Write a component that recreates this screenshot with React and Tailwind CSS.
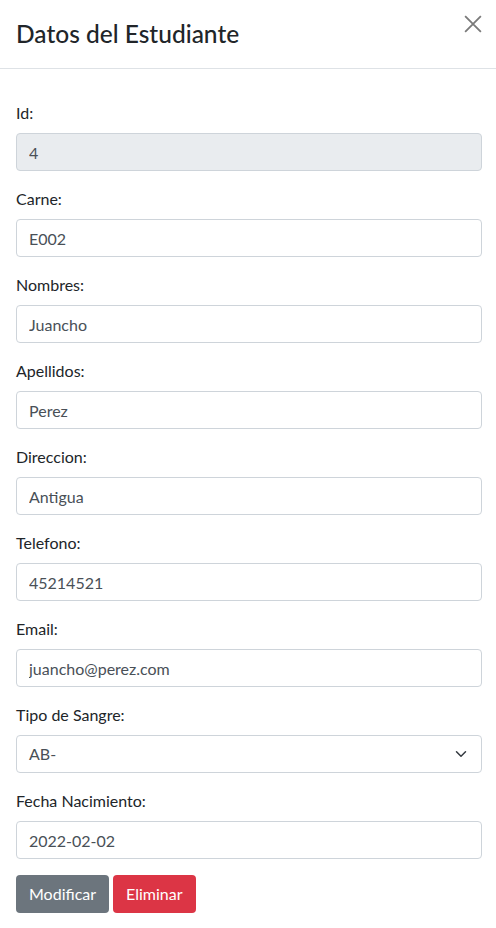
import React from 'react';

const fields = [
  { label: 'Carne:', value: 'E002' },
  { label: 'Nombres:', value: 'Juancho' },
  { label: 'Apellidos:', value: 'Perez' },
  { label: 'Direccion:', value: 'Antigua' },
  { label: 'Telefono:', value: '45214521' },
  { label: 'Email:', value: 'juancho@perez.com' },
];

const inputCls =
  'block w-full h-[38px] px-3 rounded-[4px] border border-[#ced4da] text-[16px] text-[#495057] outline-none';

function Field({ label, children }) {
  return (
    <div className="mb-4">
      <label className="block h-6 leading-6 mb-2 text-[16px] text-[#212529]">{label}</label>
      {children}
    </div>
  );
}

export default function App() {
  return (
    <div
      className="w-[496px] min-h-[928px] bg-white text-[#212529]"
      style={{ fontFamily: 'Lato, "Open Sans", sans-serif' }}
    >
      {/* Header */}
      <div className="h-[69px] flex items-center justify-between pl-4 pr-[14px] border-b border-[#dee2e6]">
        <h5 className="text-[24.5px] font-medium leading-[30px] text-[#212529]">Datos del Estudiante</h5>
        <button className="self-start mt-[15px] w-[18px] h-[18px] text-[#7a7a7a]" aria-label="Close">
          <svg viewBox="0 0 16 16" className="w-[18px] h-[18px]" fill="none" stroke="currentColor" strokeWidth="1.6">
            <path d="M1 1l14 14M15 1L1 15" />
          </svg>
        </button>
      </div>

      {/* Body */}
      <div className="pl-4 pr-[14px] pt-[32px] pb-4">
        <Field label="Id:">
          <input className={`${inputCls} bg-[#e9ecef]`} value="4" disabled readOnly />
        </Field>
        {fields.map((f) => (
          <Field key={f.label} label={f.label}>
            <input className={`${inputCls} bg-white`} value={f.value} readOnly />
          </Field>
        ))}
        <Field label="Tipo de Sangre:">
          <div className={`${inputCls} bg-white flex items-center justify-between pr-3 text-[#212529]`}>
            <span>AB-</span>
            <svg viewBox="0 0 16 16" className="w-4 h-3" fill="none" stroke="#343a40" strokeWidth="2" strokeLinecap="round" strokeLinejoin="round">
              <path d="m2 5 6 6 6-6" />
            </svg>
          </div>
        </Field>
        <Field label="Fecha Nacimiento:">
          <input className={`${inputCls} bg-white`} value="2022-02-02" readOnly />
        </Field>
        <div className="flex gap-1">
          <button className="h-[38px] px-[13px] rounded-[4px] bg-[#6c757d] text-white text-[16px]">Modificar</button>
          <button className="h-[38px] px-[13px] rounded-[4px] bg-[#dc3545] text-white text-[16px]">Eliminar</button>
        </div>
      </div>
    </div>
  );
}
